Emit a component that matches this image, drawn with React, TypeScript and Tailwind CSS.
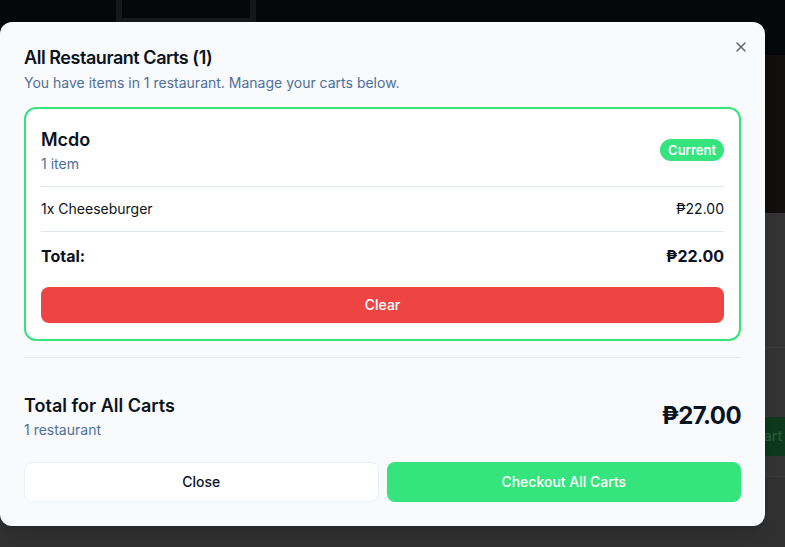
import React from 'react';
import { X } from 'lucide-react';

interface CartItem {
  name: string;
  qty: number;
  price: number;
}

const items: CartItem[] = [{ name: 'Cheeseburger', qty: 1, price: 22 }];

const peso = (n: number): string => `₱${n.toFixed(2)}`;

const App: React.FC = () => {
  const cartTotal = items.reduce((sum, i) => sum + i.qty * i.price, 0);

  return (
    <div
      className="relative h-[547px] w-[785px] overflow-hidden bg-[#303030]"
      style={{ fontFamily: 'Inter, "Noto Sans", sans-serif' }}
    >
      {/* Page behind the overlay (dimmed) */}
      <div className="flex flex-col">
        <div className="relative h-[213px] bg-[#060708]">
          <div className="ml-[116px] h-[22px] w-[140px] border-x-[6px] border-b-[4px] border-[#15171a]" />
          <div className="absolute right-0 top-[55px] h-[158px] w-[30px] bg-[#110e0c]" />
        </div>
        <div className="h-[134px] bg-[#333333]" />
        <div className="h-[1px] bg-[#3b3b3b]" />
        <div className="flex h-[128px] flex-col justify-center bg-[#333333]">
          <div className="flex justify-end">
            <div className="mr-[-16px] mt-[48px] flex h-[39px] w-[114px] items-center justify-center bg-[#0d381c] text-sm font-medium text-[#245c38]">
              Add to Cart
            </div>
          </div>
        </div>
        <div className="h-[1px] bg-[#3a3a3a]" />
      </div>

      {/* Dialog */}
      <div className="absolute left-0 top-[22px] w-[765px] rounded-xl bg-[#f8fafc] px-6 pb-6 pt-[27px] shadow-lg">
        <button className="absolute right-[16px] top-[17px] text-[#5b6270]" aria-label="Close">
          <X size={16} />
        </button>

        <div className="flex flex-col gap-1.5">
          <h2 className="text-lg font-semibold leading-none tracking-tight text-[#0b1220]">
            All Restaurant Carts (1)
          </h2>
          <p className="text-sm text-[#4f6f9b]">You have items in 1 restaurant. Manage your carts below.</p>
        </div>

        <div className="mt-[14px] rounded-xl border-2 border-[#35e47d] bg-white px-[15px] pb-4 pt-[17px]">
          <div className="flex items-center justify-between pb-3">
            <div>
              <h3 className="text-lg font-semibold text-[#0b1220]">Mcdo</h3>
              <p className="text-sm text-[#4f6f9b]">1 item</p>
            </div>
            <span className="rounded-full bg-[#35e47d] px-2 py-[3px] text-[13px] font-semibold leading-4 text-white">
              Current
            </span>
          </div>

          <div className="border-y border-[#e2e8f0]">
            {items.map((item) => (
              <div key={item.name} className="flex justify-between py-3 text-sm text-[#0b1220]">
                <span>
                  {item.qty}x {item.name}
                </span>
                <span>{peso(item.qty * item.price)}</span>
              </div>
            ))}
          </div>

          <div className="flex justify-between py-3 text-base font-bold text-[#0b1220]">
            <span>Total:</span>
            <span>{peso(cartTotal)}</span>
          </div>

          <button className="mt-[7px] h-9 w-full rounded-lg bg-[#ef4444] text-sm font-medium text-white">
            Clear
          </button>
        </div>

        <div className="mt-4 h-[1px] bg-[#e2e8f0]" />

        <div className="mt-[34px] flex items-center justify-between">
          <div>
            <h3 className="text-lg font-semibold text-[#0b1220]">Total for All Carts</h3>
            <p className="text-sm text-[#4f6f9b]">1 restaurant</p>
          </div>
          <span className="text-2xl font-bold tracking-tight text-[#0b1220]">{peso(27)}</span>
        </div>

        <div className="mt-[22px] grid grid-cols-2 gap-2">
          <button className="h-10 rounded-lg border border-[#edf0f4] bg-white text-sm font-medium text-[#0b1220]">
            Close
          </button>
          <button className="h-10 rounded-lg bg-[#35e47d] text-sm font-medium text-white">
            Checkout All Carts
          </button>
        </div>
      </div>
    </div>
  );
};

export default App;
